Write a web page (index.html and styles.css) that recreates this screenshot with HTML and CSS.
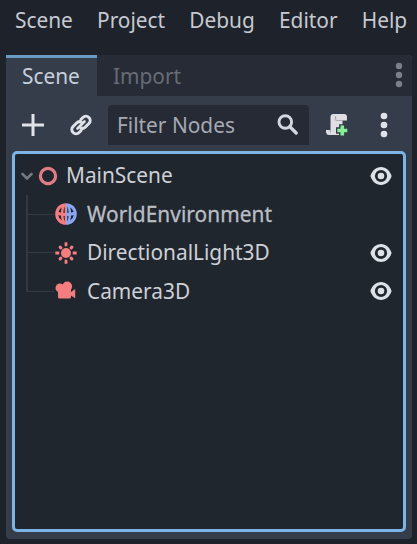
FILE: index.html
```html
<!DOCTYPE html>
<html lang="en">
<head>
<meta charset="utf-8">
<title>Scene dock</title>
<link rel="stylesheet" href="styles.css">
</head>
<body>
<svg class="defs" aria-hidden="true">
  <symbol id="eye" viewBox="0 0 22 20">
    <path fill="#dce0e7" fill-rule="evenodd" d="M11 1C6 1 2 4.800 .4 10 2 15.200 6 19 11 19s9-3.800 10.600-9C20 4.800 16 1 11 1zm0 2.900a6.100 6.100 0 1 1 0 12.200 6.100 6.100 0 0 1 0-12.200z"/>
    <circle cx="11" cy="10" r="3.300" fill="#dce0e7"/>
  </symbol>
</svg>
<nav class="menu">
  <span>Scene</span><span>Project</span><span>Debug</span><span>Editor</span><span>Help</span>
</nav>
<main class="dock">
  <div class="tabs">
    <div class="tab active">Scene</div>
    <div class="tab">Import</div>
    <svg class="tab-menu" width="8" height="26" fill="#7b7f89"><circle cx="4" cy="4" r="3.200"/><circle cx="4" cy="13" r="3.200"/><circle cx="4" cy="22" r="3.200"/></svg>
  </div>
  <div class="toolbar">
    <svg class="add" width="22" height="22" viewBox="0 0 22 22"><path d="M11 0v22M0 11h22" stroke="#e0e3ea" stroke-width="3"/></svg>
    <svg class="link" width="24" height="24" viewBox="0 0 24 24" fill="none" stroke="#e0e3ea" stroke-width="3">
      <path d="M11.200 7.200l2.700-2.700a4.200 4.200 0 0 1 6 6l-3.500 3.500a4.200 4.200 0 0 1-5.400.500"/>
      <path d="M12.800 16.800l-2.700 2.700a4.200 4.200 0 0 1-6-6l3.500-3.500a4.200 4.200 0 0 1 5.400-.500"/>
      <path d="M8.500 15.500l7-7" stroke-linecap="round" stroke-width="2.600"/>
    </svg>
    <div class="filter">
      <span>Filter Nodes</span>
      <svg width="22" height="22" viewBox="0 0 22 22" fill="none" stroke="#d3d7de"><circle cx="8.300" cy="8" r="6.300" stroke-width="2.900"/><path d="M12.800 12.600l6.400 6.400" stroke-width="3.400" stroke-linecap="round"/></svg>
    </div>
    <svg class="script" width="24" height="24" viewBox="0 0 24 24">
      <path fill="#dfdfe3" d="M8.500 1H19a3 3 0 0 1 3 3v3.500h-4.500V22H4.500a3.500 3.500 0 0 1-3.500-3.500V17h4.500V4a3 3 0 0 1 3-3z"/>
      <path fill="none" stroke="#a9acb7" stroke-width="1.200" d="M10.500 3V6a1.500 1.500 0 0 0 1.500 1.500h6M5.300 17v2.500"/>
      <path fill="none" stroke="#363d4a" stroke-width="6.500" d="M17.300 11.200v12.600M11 17.500h12.500"/>
      <path fill="none" stroke="#87ee98" stroke-width="3.600" d="M17.300 12.500v10M12.300 17.500h10"/>
    </svg>
    <svg class="more" width="8" height="26" fill="#e0e3ea"><circle cx="4" cy="4" r="3.300"/><circle cx="4" cy="13" r="3.300"/><circle cx="4" cy="22" r="3.300"/></svg>
  </div>
  <div class="tree">
    <div class="row root">
      <svg class="chevron" width="12" height="9" viewBox="0 0 12 9"><path d="M1.500 2l4.500 4.500L10.500 2" fill="none" stroke="#737983" stroke-width="2.600" stroke-linecap="round" stroke-linejoin="round"/></svg>
      <svg class="node" width="20" height="20"><circle cx="10" cy="10" r="7.600" fill="none" stroke="#e17d87" stroke-width="3.200"/></svg>
      <span>MainScene</span>
      <svg class="eye"><use href="#eye"/></svg>
    </div>
    <div class="row child">
      <svg class="icon" width="22" height="22" viewBox="0 0 22 22">
        <defs><linearGradient id="split"><stop offset=".5" stop-color="#f47d80"/><stop offset=".5" stop-color="#8da5f3"/></linearGradient></defs>
        <circle cx="11" cy="11" r="10.800" fill="url(#split)"/>
        <g fill="#20262d"><path d="M6.900 4.300A7.900 7.900 0 0 0 3.500 8.700c.9.500 1.600.7 2.400.8.100-1.900.4-3.600 1-5.200zM15.100 4.300a7.900 7.900 0 0 1 3.400 4.400c-.9.500-1.600.7-2.400.8-.1-1.900-.4-3.600-1-5.200zM9.700 3.200C8.900 5 8.500 7.300 8.400 9.800l1.300.1zM12.300 3.200c.8 1.800 1.200 4.100 1.300 6.600l-1.300.1zM3.200 11.900c1 .4 1.800.6 2.700.7.100 1.700.4 3.400 1 5a7.900 7.900 0 0 1-3.700-5.700zM18.800 11.900c-1 .4-1.800.6-2.700.7-.1 1.700-.4 3.400-1 5a7.900 7.900 0 0 0 3.700-5.700zM8.500 12.900l1.200.1v5.700c-.7-1.700-1.100-3.600-1.200-5.800zM13.500 12.900l-1.200.1v5.700c.7-1.700 1.100-3.600 1.200-5.800z"/></g>
      </svg>
      <span class="brief">WorldEnvironment</span>
    </div>
    <div class="row child">
      <svg class="icon" width="22" height="22" viewBox="0 0 22 22">
        <circle cx="11" cy="11" r="5" fill="#f47d80"/>
        <path d="M11 .3v4M11 17.700v4M.3 11h4M17.700 11h4" stroke="#f47d80" stroke-width="2.800"/>
        <path d="M5.200 5.200l.6.600M16.200 16.200l.6.600M16.800 5.200l-.6.600M5.800 16.200l-.6.600" stroke="#f47d80" stroke-width="3.100" stroke-linecap="round"/>
      </svg>
      <span>DirectionalLight3D</span>
      <svg class="eye"><use href="#eye"/></svg>
    </div>
    <div class="row child last">
      <svg class="icon" width="22" height="22" viewBox="0 0 22 22" fill="#f47d80">
        <circle cx="12.200" cy="6.400" r="4.900"/><circle cx="4.900" cy="7.900" r="4.400"/>
        <path d="M3 8h13v4l4.200-3v9.200L16 15.500V17a1.500 1.500 0 0 1-1.500 1.500h-10A1.500 1.500 0 0 1 3 17z"/>
      </svg>
      <span>Camera3D</span>
      <svg class="eye"><use href="#eye"/></svg>
    </div>
  </div>
</main>
</body>
</html>
```
FILE: styles.css
```css
* { box-sizing: border-box; }
body {
  margin: 0;
  width: 417px;
  height: 544px;
  overflow: hidden;
  background: #1e222b;
  color: #cdd0d6;
  font: 20.85px/28px "Noto Sans", sans-serif;
  white-space: nowrap;
}
svg { display: block; flex: none; }
.defs { width: 0; height: 0; position: absolute; }
.menu {
  display: flex;
  gap: 24.2px;
  height: 55px;
  padding: 6px 0 0 15px;
  color: #c6c9d0;
}
.dock {
  width: 406px;
  height: 484px;
  margin-left: 6px;
  display: flex;
  flex-direction: column;
  background: #363d4a;
  border-radius: 0 4px 4px 4px;
}
.tabs {
  display: flex;
  height: 41px;
  background: #262b35;
  border-radius: 0 5px 0 0;
}
.tab {
  padding: 7px 16px 0;
  border-top: 0 solid #699cc5;
  color: #676c76;
}
.tab.active {
  width: 91px;
  padding-top: 4px;
  border-top-width: 3px;
  background: #363d4a;
  color: #c6cfda;
}
.tab-menu { margin: 7px 9px 0 auto; }
.toolbar {
  display: flex;
  align-items: center;
  height: 56px;
  padding: 2px 0 0 16px;
}
.link { margin-left: 25px; }
.filter {
  display: flex;
  align-items: center;
  justify-content: space-between;
  width: 201px;
  height: 40px;
  margin-left: 15px;
  padding: 0 10px 0 9px;
  border-radius: 4px 4px 0 0;
  background: #252a34;
  color: #a6a9b1;
}
.script { margin-left: 16px; }
.more { margin-left: 31px; }
.tree {
  width: 394px;
  height: 381px;
  margin: -1px 0 0 6px;
  padding-top: 2px;
  border: 3px solid #7cb4e6;
  border-radius: 5px;
  background: #20262d;
}
.row {
  display: flex;
  align-items: center;
  height: 38.6px;
  padding-right: 11px;
}
.root { padding-left: 6px; }
.chevron { margin-top: 2px; }
.node { margin: 0 8px 0 5px; }
.child {
  position: relative;
  padding-left: 40px;
}
.child::before, .child::after {
  content: "";
  position: absolute;
  left: 11px;
  background: #343a42;
}
.child::before { top: 0; width: 2px; height: 100%; }
.child.last::before { height: 50%; }
.child::after { top: 50%; width: 28px; height: 1px; }
.icon { margin-right: 10px; }
.node, .icon, .eye { margin-top: 1px; }
.last .icon, .last .eye { margin-top: 0; }
.eye { width: 22px; height: 20px; margin-left: auto; }
.brief { color: #b9bdc4; letter-spacing: .06px; -webkit-text-stroke: .3px; }
```
